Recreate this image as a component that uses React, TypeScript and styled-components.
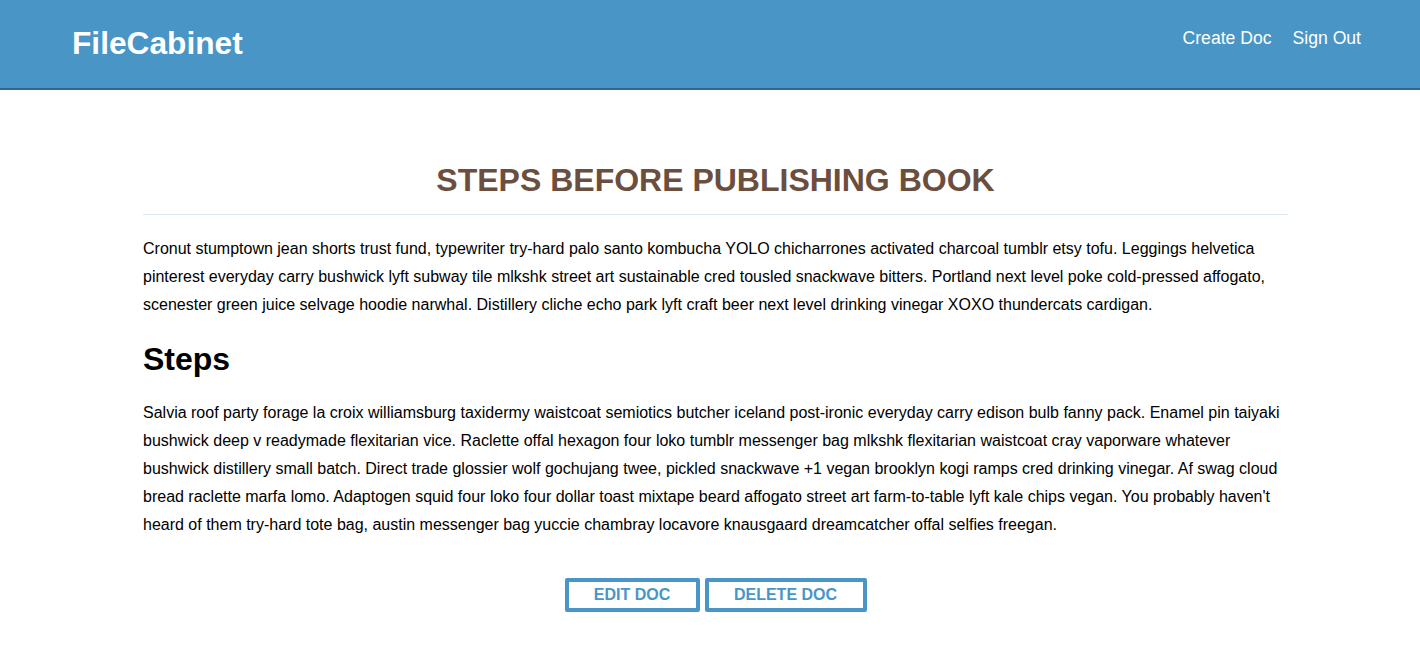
import { FunctionComponent } from "react";
import styled, { createGlobalStyle } from "styled-components";

const GlobalStyle = createGlobalStyle`
  body {
    margin: 0;
    font-family: "Liberation Sans", Arial, sans-serif;
    background: #fff;
    color: #000;
  }
`;

const Header = styled.header`
  height: 88px;
  background: #4895c6;
  border-bottom: 2px solid #2f6894;
  display: flex;
  align-items: flex-start;
  justify-content: space-between;
  padding: 0 59px 0 72px;
`;

const Logo = styled.a`
  color: #fff;
  font-size: 31.7px;
  font-weight: bold;
  line-height: 1;
  margin-top: 28px;
  text-decoration: none;
`;

const Nav = styled.nav`
  display: flex;
  gap: 21px;
  margin-top: 28px;
`;

const NavLink = styled.a`
  color: #fff;
  font-size: 17.6px;
  line-height: 20px;
  text-decoration: none;
`;

const Main = styled.main`
  margin: 0 132px 0 143px;
  padding-top: 72px;
`;

const Title = styled.h1`
  margin: 0;
  padding-bottom: 16px;
  border-bottom: 1px solid #d9e9f3;
  color: #6b4e3e;
  font-size: 32px;
  line-height: 36px;
  text-align: center;
  text-transform: uppercase;
`;

const Paragraph = styled.p`
  margin: 20px 0 0;
  font-size: 16px;
  line-height: 28px;
`;

const SubHeading = styled.h2`
  margin: 20px 0 0;
  font-size: 32px;
  line-height: 40px;
`;

const Actions = styled.div`
  display: flex;
  justify-content: center;
  gap: 5px;
  margin-top: 39px;
`;

const Button = styled.button<{ width: number }>`
  width: ${(p) => p.width}px;
  height: 34px;
  background: #fff;
  border: 4px solid #4895c6;
  border-radius: 2px;
  color: #4895c6;
  font-family: "Liberation Sans", Arial, sans-serif;
  font-size: 16px;
  font-weight: bold;
  text-transform: uppercase;
  padding: 0;
  cursor: pointer;
`;

const App: FunctionComponent = () => {
  return (
    <>
      <GlobalStyle />
      <Header>
        <Logo href="#">FileCabinet</Logo>
        <Nav>
          <NavLink href="#">Create Doc</NavLink>
          <NavLink href="#">Sign Out</NavLink>
        </Nav>
      </Header>
      <Main>
        <Title>Steps before publishing book</Title>
        <Paragraph>
          Cronut stumptown jean shorts trust fund, typewriter try-hard palo santo kombucha YOLO
          chicharrones activated charcoal tumblr etsy tofu. Leggings helvetica pinterest everyday
          carry bushwick lyft subway tile mlkshk street art sustainable cred tousled snackwave
          bitters. Portland next level poke cold-pressed affogato, scenester green juice selvage
          hoodie narwhal. Distillery cliche echo park lyft craft beer next level drinking vinegar
          XOXO thundercats cardigan.
        </Paragraph>
        <SubHeading>Steps</SubHeading>
        <Paragraph>
          Salvia roof party forage la croix williamsburg taxidermy waistcoat semiotics butcher
          iceland post-ironic everyday carry edison bulb fanny pack. Enamel pin taiyaki bushwick
          deep v readymade flexitarian vice. Raclette offal hexagon four loko tumblr messenger bag
          mlkshk flexitarian waistcoat cray vaporware whatever bushwick distillery small batch.
          Direct trade glossier wolf gochujang twee, pickled snackwave +1 vegan brooklyn kogi ramps
          cred drinking vinegar. Af swag cloud bread raclette marfa lomo. Adaptogen squid four loko
          four dollar toast mixtape beard affogato street art farm-to-table lyft kale chips vegan.
          You probably haven't heard of them try-hard tote bag, austin messenger bag yuccie
          chambray locavore knausgaard dreamcatcher offal selfies freegan.
        </Paragraph>
        <Actions>
          <Button width={135}>Edit Doc</Button>
          <Button width={162}>Delete Doc</Button>
        </Actions>
      </Main>
    </>
  );
};

export default App;
